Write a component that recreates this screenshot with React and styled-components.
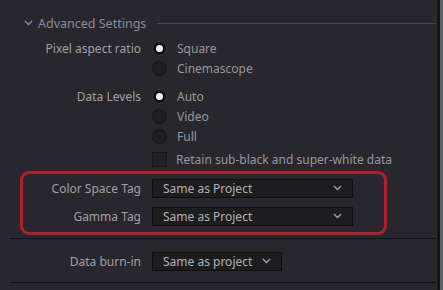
import React from 'react';
import styled, { createGlobalStyle } from 'styled-components';

const GlobalStyle = createGlobalStyle`
  html, body {
    margin: 0;
    padding: 0;
    background: #28272d;
  }
  body {
    font-family: "Noto Sans", "Open Sans", sans-serif;
    font-size: 12px;
  }
`;

const Frame = styled.div`
  display: flex;
  width: 443px;
  height: 290px;
  overflow: hidden;
  background: #28272d;
`;

const Panel = styled.div`
  flex: 1;
  display: flex;
  flex-direction: column;
  border-right: 1px solid #2e2e33;
`;

const Edge = styled.div`
  width: 3px;
  background: #151518;
`;

const Scroll = styled.div`
  width: 3px;
  background: #5a5f68;
`;

const Header = styled.div`
  display: flex;
  align-items: center;
  height: 20px;
  margin-top: 13px;
  padding-left: 24px;
  color: #8c8c92;
  font-size: 12.5px;
`;

const HeaderTitle = styled.span`
  margin-left: 5px;
`;

const HeaderLine = styled.div`
  flex: 1;
  height: 1px;
  margin-left: 11px;
  background: #48484d;
`;

const Group = styled.div`
  display: flex;
  flex-direction: column;
  margin-top: ${p => p.$top || 0}px;
`;

const Row = styled.div`
  display: grid;
  grid-template-columns: ${p => p.$labelW || 141}px auto;
  column-gap: 11px;
  align-items: center;
  height: 20px;
  margin-top: ${p => p.$top || 0}px;
`;

const Label = styled.div`
  text-align: right;
  color: #a0a0a4;
  white-space: nowrap;
`;

const Option = styled.div`
  display: flex;
  align-items: center;
  color: #98989c;
  white-space: nowrap;
`;

const Radio = styled.span`
  box-sizing: border-box;
  width: 15px;
  height: 15px;
  border-radius: 50%;
  margin-right: 10px;
  display: flex;
  align-items: center;
  justify-content: center;
  background: ${p => (p.$on ? '#101012' : '#1f1f21')};
  border: 1px solid ${p => (p.$on ? '#3a3a3e' : '#161618')};
  &::after {
    content: '';
    display: ${p => (p.$on ? 'block' : 'none')};
    width: 7px;
    height: 7px;
    border-radius: 50%;
    background: #f4f4f4;
  }
`;

const Check = styled.span`
  box-sizing: border-box;
  width: 15px;
  height: 15px;
  margin-right: 9px;
  background: #222224;
  border: 1px solid #18181a;
`;

const Highlight = styled.div`
  box-sizing: border-box;
  width: 367px;
  margin: 2px 0 0 20px;
  padding: 4px 0 6px;
  border: 3px solid #b0202b;
  border-radius: 9px;
  display: flex;
  flex-direction: column;
  gap: 8px;
`;

const Separator = styled.div`
  height: 1px;
  margin: ${p => p.$top}px 0 0 10px;
  background: #131315;
`;

const Select = styled.div`
  box-sizing: border-box;
  width: ${p => p.$w}px;
  height: 19px;
  display: flex;
  align-items: center;
  justify-content: space-between;
  padding: 0 10px 0 10px;
  background: #1d1d20;
  border: 1px solid #0f0f11;
  color: #b0b0b4;
  white-space: nowrap;
`;

const Chevron = ({ color = '#a4a4a8' }) => (
  <svg width="9" height="6" viewBox="0 0 9 6">
    <path d="M1 1 L4.5 4.5 L8 1" fill="none" stroke={color} strokeWidth="1.4" />
  </svg>
);

const Dropdown = ({ value, w }) => (
  <Select $w={w}>
    <span>{value}</span>
    <Chevron />
  </Select>
);

export default function App() {
  return (
    <>
      <GlobalStyle />
      <Frame>
        <Panel>
          <Header>
            <Chevron color="#8c8c92" />
            <HeaderTitle>Advanced Settings</HeaderTitle>
            <HeaderLine />
          </Header>

          <Group $top={5}>
            <Row>
              <Label>Pixel aspect ratio</Label>
              <Option><Radio $on />Square</Option>
            </Row>
            <Row>
              <Label />
              <Option><Radio />Cinemascope</Option>
            </Row>
          </Group>

          <Group $top={8}>
            <Row>
              <Label>Data Levels</Label>
              <Option><Radio $on />Auto</Option>
            </Row>
            <Row>
              <Label />
              <Option><Radio />Video</Option>
            </Row>
            <Row>
              <Label />
              <Option><Radio />Full</Option>
            </Row>
            <Row $top={3}>
              <Label />
              <Option><Check />Retain sub-black and super-white data</Option>
            </Row>
          </Group>

          <Highlight>
            <Row $labelW={118}>
              <Label>Color Space Tag</Label>
              <Dropdown value="Same as Project" w={201} />
            </Row>
            <Row $labelW={118}>
              <Label>Gamma Tag</Label>
              <Dropdown value="Same as Project" w={201} />
            </Row>
          </Highlight>

          <Separator $top={3} />
          <Row $top={12}>
            <Label>Data burn-in</Label>
            <Dropdown value="Same as project" w={130} />
          </Row>
          <Separator $top={11} />
        </Panel>
        <Edge />
        <Scroll />
      </Frame>
    </>
  );
}
